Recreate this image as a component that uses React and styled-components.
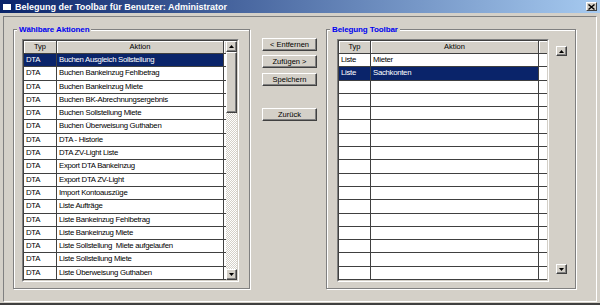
import React from 'react';
import styled, { createGlobalStyle } from 'styled-components';

const sans = `"Liberation Sans", Arial, sans-serif`;

const GlobalStyle = createGlobalStyle`
  body {
    margin: 0;
    background: #d4d0c8;
    font-family: ${sans};
  }
  * { box-sizing: border-box; }
`;

const Window = styled.div`
  width: 600px;
  height: 305px;
  background: #d4d0c8;
  display: flex;
  flex-direction: column;
  border-bottom: 2px solid #404040;
`;

const TitleBar = styled.div`
  height: 13px;
  flex: none;
  display: flex;
  align-items: center;
  gap: 3px;
  padding: 0 3px 0 2px;
  background: linear-gradient(to right, #0a246a, #a6caf0);
  color: #fff;
  font: bold 9px ${sans};
  white-space: nowrap;
`;

const CloseBtn = styled.div`
  margin-left: auto;
  width: 11px;
  height: 9px;
  background: #d4d0c8;
  border: 1px solid;
  border-color: #fff #404040 #404040 #fff;
  display: flex;
  align-items: center;
  justify-content: center;
`;

const Panel = styled.div`
  flex: 1;
  margin: 3px 3px 1px 3px;
  border: 1px solid;
  border-color: #808080 #fff #fff #808080;
  padding: 12px 20px 12px 9px;
  display: flex;
`;

const Group = styled.div`
  position: relative;
  width: ${p => p.$w}px;
  flex: none;
  border: 1px solid #808080;
  box-shadow: inset 1px 1px 0 #fff, 1px 1px 0 #fff;
  display: flex;
  padding: ${p => p.$pad};
`;

const Caption = styled.div`
  position: absolute;
  top: -6px;
  left: 3px;
  padding: 0 2px;
  background: #d4d0c8;
  color: #0000f0;
  font: bold 8px ${sans};
  letter-spacing: -0.1px;
  line-height: 12px;
`;

const Frame = styled.div`
  flex: 1;
  border: 1px solid;
  border-color: #808080 #fff #fff #808080;
  display: flex;
`;

const FrameInner = styled.div`
  flex: 1;
  border: 1px solid;
  border-color: #404040 #d4d0c8 #d4d0c8 #404040;
  display: flex;
  background: #a0a0a0;
  overflow: hidden;
`;

const Grid = styled.div`
  flex: 1;
  display: flex;
  flex-direction: column;
  background: #fff;
`;

const Row = styled.div`
  display: grid;
  grid-template-columns: ${p => p.$cols};
  height: ${p => (p.$head ? '13px' : '13.3px')};
  flex: none;
  border-bottom: 1px solid #404040;
  font: 7.8px ${sans};
  color: #000;
`;

const HeadCell = styled.div`
  background: #d4d0c8;
  box-shadow: inset 1px 1px 0 #fff;
  border-right: ${p => (p.$last ? 'none' : '1px solid #404040')};
  text-align: center;
  line-height: 12px;
  font-size: 7.5px;
`;

const Cell = styled.div`
  padding-left: 2px;
  line-height: 12.3px;
  letter-spacing: -0.3px;
  white-space: pre;
  overflow: hidden;
  border-right: ${p => (p.$line ? '1px solid #404040' : 'none')};
  background: ${p => (p.$sel ? '#0a246a' : '#fff')};
  color: ${p => (p.$sel ? '#fff' : '#000')};
`;

const Scrollbar = styled.div`
  width: 11px;
  flex: none;
  display: flex;
  flex-direction: column;
  background: repeating-conic-gradient(#fff 0 25%, #d4d0c8 0 50%) 0 0 / 2px 2px;
`;

const Raised = styled.div`
  width: 11px;
  height: ${p => p.$h || 11}px;
  flex: none;
  background: #d4d0c8;
  border: 1px solid;
  border-color: #fff #404040 #404040 #fff;
  box-shadow: inset -1px -1px 0 #808080;
  display: flex;
  align-items: center;
  justify-content: center;
`;

const Thumb = styled(Raised)`
  margin-bottom: auto;
`;

const Middle = styled.div`
  width: 76px;
  flex: none;
  display: flex;
  flex-direction: column;
  padding: 9px 0 0 12px;
`;

const Button = styled.div`
  width: 55px;
  height: 13px;
  margin-top: ${p => p.$mt || 0}px;
  background: #d4d0c8;
  border: 1px solid;
  border-color: #fff #404040 #404040 #fff;
  box-shadow: inset -1px -1px 0 #808080;
  font: 7.5px ${sans};
  line-height: 11px;
  text-align: center;
  color: #000;
`;

const SideButtons = styled.div`
  width: 11px;
  flex: none;
  margin-left: 7px;
  display: flex;
  flex-direction: column;
  justify-content: space-between;
  padding: 7px 0 8px;
`;

const Arrow = ({ down }) => (
  <svg width="5" height="3" viewBox="0 0 5 3">
    <polygon points={down ? '0,0 5,0 2.5,3' : '2.5,0 5,3 0,3'} fill="#000" />
  </svg>
);

const left = [
  'Buchen Ausgleich Sollstellung',
  'Buchen Bankeinzug Fehlbetrag',
  'Buchen Bankeinzug Miete',
  'Buchen BK-Abrechnungsergebnis',
  'Buchen Sollstellung Miete',
  'Buchen Überweisung Guthaben',
  'DTA - Historie',
  'DTA ZV-Light Liste',
  'Export DTA Bankeinzug',
  'Export DTA ZV-Light',
  'Import Kontoauszüge',
  'Liste Aufträge',
  'Liste Bankeinzug Fehlbetrag',
  'Liste Bankeinzug Miete',
  'Liste Sollstellung  Miete aufgelaufen',
  'Liste Sollstellung Miete',
  'Liste Überweisung Guthaben',
];

const right = [
  ['Liste', 'Mieter'],
  ['Liste', 'Sachkonten'],
];

const leftCols = '33px 167px 1fr';
const rightCols = '32px 168px 1fr';

export default function App() {
  return (
    <>
      <GlobalStyle />
      <Window>
        <TitleBar>
          <svg width="10" height="9" viewBox="0 0 10 9">
            <rect x="0.5" y="0.5" width="9" height="8" fill="#fff" stroke="#0a246a" />
            <rect x="0" y="0" width="10" height="2" fill="#0a246a" />
          </svg>
          <span>Belegung der Toolbar für Benutzer: Administrator</span>
          <CloseBtn>
            <svg width="7" height="6" viewBox="0 0 7 6">
              <path d="M0.5 0.5 L6.5 5.5 M6.5 0.5 L0.5 5.5" stroke="#000" strokeWidth="1.4" />
            </svg>
          </CloseBtn>
        </TitleBar>
        <Panel>
          <Group $w={237} $pad="9px 10px 6px 8px">
            <Caption>Wählbare Aktionen</Caption>
            <Frame>
              <FrameInner>
                <Grid>
                  <Row $head $cols={leftCols}>
                    <HeadCell>Typ</HeadCell>
                    <HeadCell>Aktion</HeadCell>
                    <HeadCell $last />
                  </Row>
                  {left.map((a, i) => (
                    <Row key={i} $cols={leftCols}>
                      <Cell $line $sel={i === 0}>DTA</Cell>
                      <Cell $line $sel={i === 0}>{a}</Cell>
                      <Cell />
                    </Row>
                  ))}
                </Grid>
                <Scrollbar>
                  <Raised><Arrow /></Raised>
                  <Thumb $h={61} />
                  <Raised><Arrow down /></Raised>
                </Scrollbar>
              </FrameInner>
            </Frame>
          </Group>

          <Middle>
            <Button>&lt; Entfernen</Button>
            <Button $mt={4}>Zufügen &gt;</Button>
            <Button $mt={5}>Speichern</Button>
            <Button $mt={22}>Zurück</Button>
          </Middle>

          <Group $w={250} $pad="9px 8px 6px 10px">
            <Caption>Belegung Toolbar</Caption>
            <Frame>
              <FrameInner>
                <Grid>
                  <Row $head $cols={rightCols}>
                    <HeadCell>Typ</HeadCell>
                    <HeadCell>Aktion</HeadCell>
                    <HeadCell $last />
                  </Row>
                  {Array.from({ length: 17 }).map((_, i) => (
                    <Row key={i} $cols={rightCols}>
                      <Cell $line $sel={i === 1}>{right[i] ? right[i][0] : ''}</Cell>
                      <Cell $line $sel={i === 1}>{right[i] ? right[i][1] : ''}</Cell>
                      <Cell />
                    </Row>
                  ))}
                </Grid>
              </FrameInner>
            </Frame>
            <SideButtons>
              <Raised $h={10}><Arrow /></Raised>
              <Raised $h={10}><Arrow down /></Raised>
            </SideButtons>
          </Group>
        </Panel>
      </Window>
    </>
  );
}
